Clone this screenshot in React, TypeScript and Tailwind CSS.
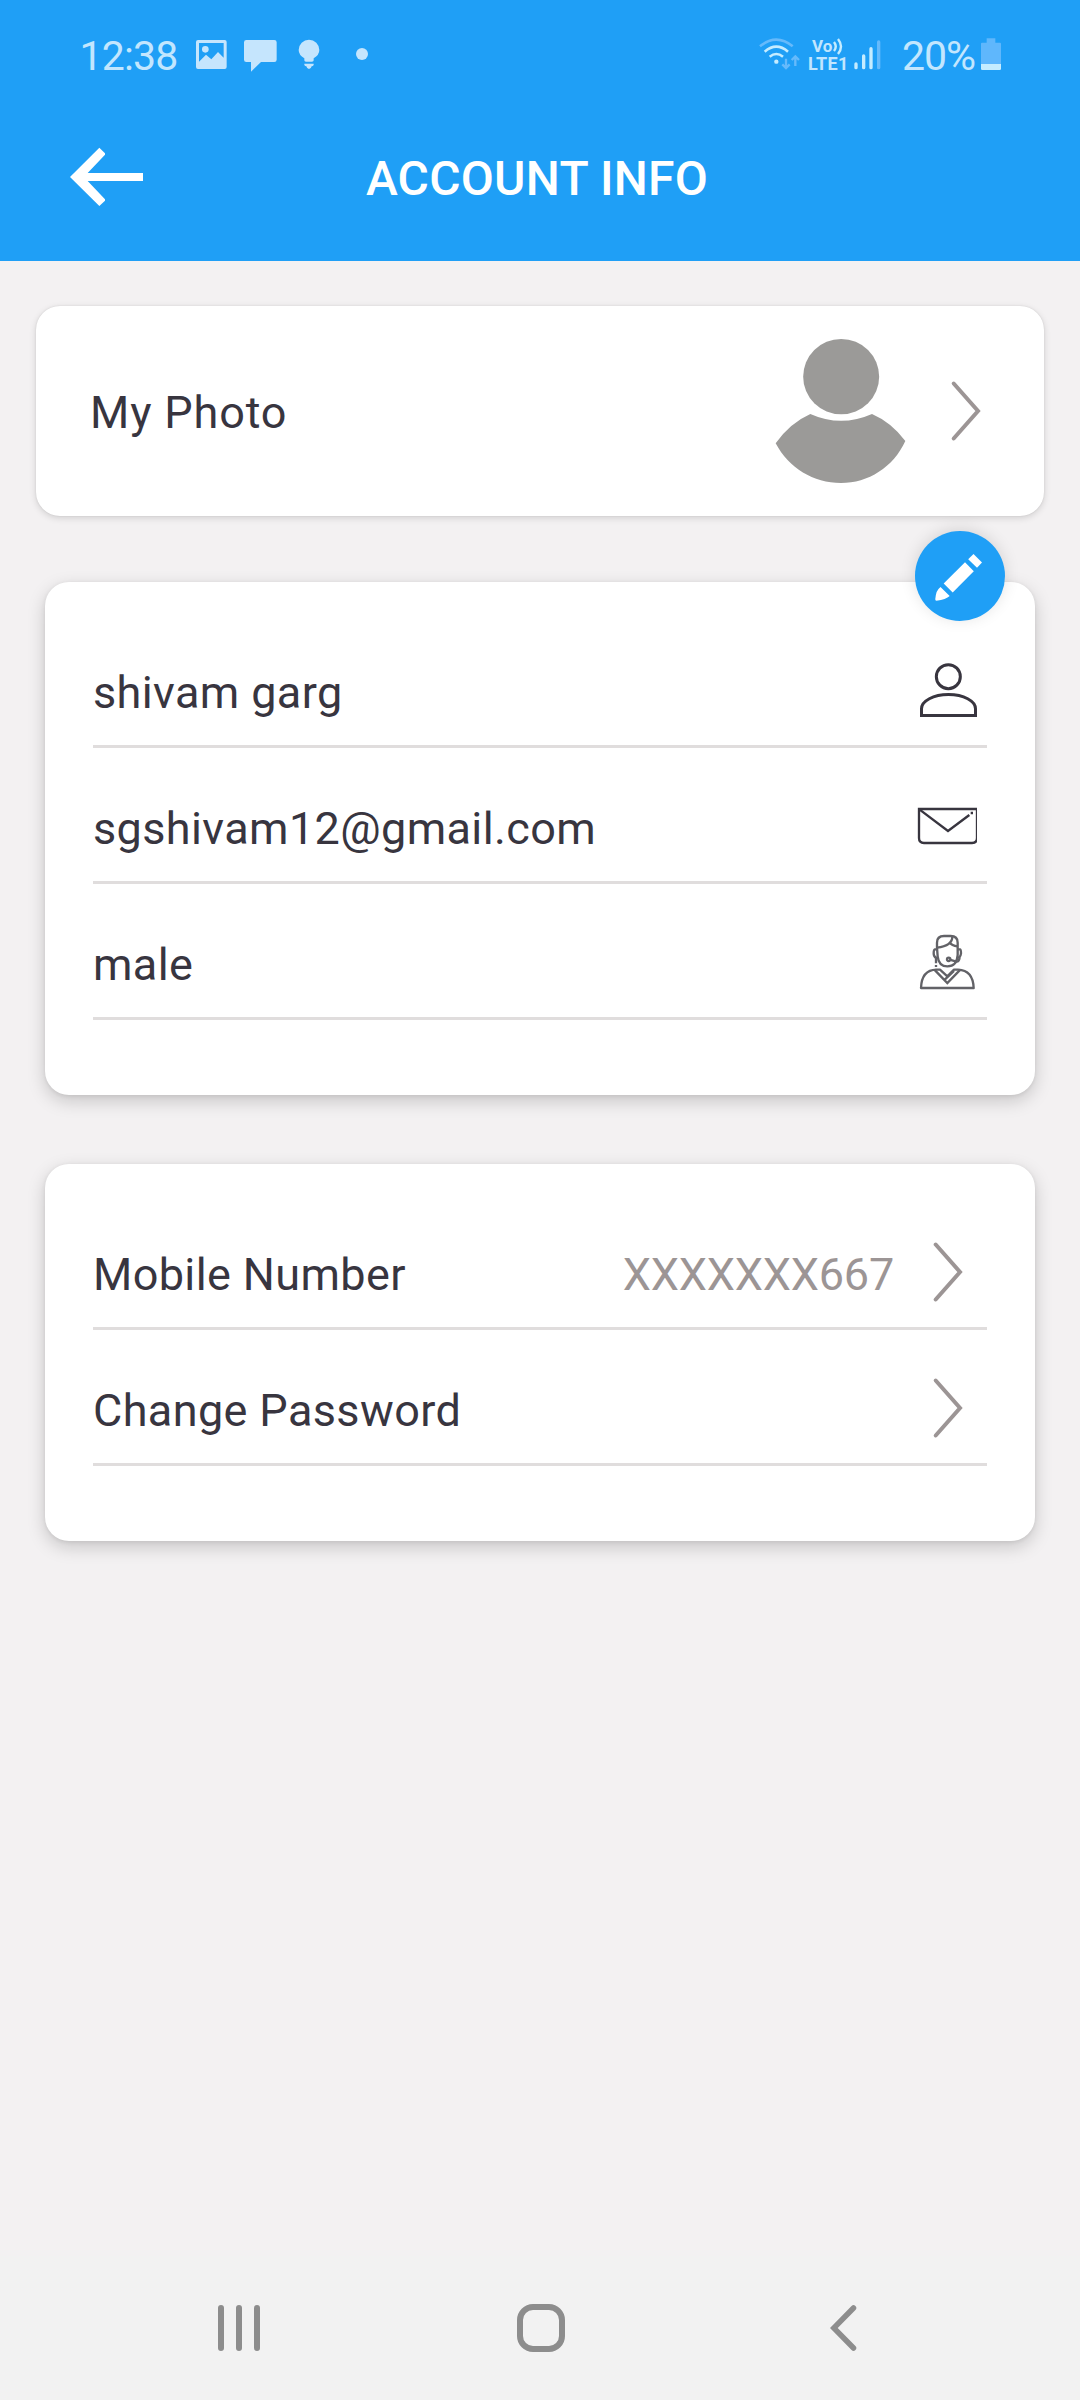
import type { ReactNode } from "react";

function Chevron() {
  return (
    <svg className="h-[62px] w-[31px] shrink-0" viewBox="0 0 31 62" fill="none" stroke="#9c9595" strokeWidth="4" strokeLinecap="round">
      <path d="M3.7 3.5 L28 31 L3.7 58.5" strokeLinejoin="miter" />
    </svg>
  );
}

function PhotoIcon() {
  return (
    <svg className="h-9 w-[31px]" viewBox="468 108 93 108" fill="#c5e5fd">
      <path fillRule="evenodd" d="M474 120H554Q560 120 560 126V201Q560 207 554 207H474Q468 207 468 201V126Q468 120 474 120ZM477 129V185L498 164L514 178L534 156L551 173V129Z" />
      <circle cx="496" cy="148" r="10" />
    </svg>
  );
}

function ChatIcon() {
  return (
    <svg className="h-9 w-[33px]" viewBox="612 108 99 108" fill="#c5e5fd">
      <path d="M619 120H703Q710 120 710 127V179Q710 186 703 186H663L633 215V186H619Q612 186 612 179V127Q612 120 619 120Z" />
    </svg>
  );
}

function BulbIcon() {
  return (
    <svg className="h-9 w-[22px]" viewBox="775 108 66 108" fill="#c5e5fd">
      <path d="M808 119A31 31 0 0 1 839 150Q839 165 822 175V181Q822 185 817 185H799Q794 185 794 181V175Q777 165 777 150A31 31 0 0 1 808 119Z" />
      <path d="M794 191H822V195Q820 199 816 199Q814 207 808 207Q802 207 800 199Q796 199 794 195Z" />
    </svg>
  );
}

function WifiIcon() {
  return (
    <svg className="h-9 w-[41px]" viewBox="59 108 123 108" fill="none" strokeWidth="8">
      <path d="M62 139Q111 99 160 139" stroke="#66bafb" />
      <path d="M76 155Q111 125 146 155M91 170Q111 154 131 170" stroke="#c5ecff" />
      <circle cx="111" cy="185" r="6.5" fill="#c5ecff" />
      <path d="M140 176V202M129 193L140 204L151 193M168 198V170M157 180L168 169L179 180" stroke="#66bafb" strokeWidth="7" />
    </svg>
  );
}

function SignalIcon() {
  return (
    <svg className="h-9 w-[27px]" viewBox="342 108 81 108" fill="none" strokeWidth="10" strokeLinecap="round" stroke="#c5ecff">
      <path d="M348 192V203M371 168V203M393 146V203" />
      <path d="M416 126V203" stroke="#66bafb" />
    </svg>
  );
}

function BatteryIcon() {
  return (
    <svg className="h-9 w-[20px]" viewBox="723 108 60 108">
      <path d="M740 115H766V128H780Q783 128 783 131V192H723V131Q723 128 726 128H740Z" fill="#5fb7fc" />
      <path d="M723 192H783V206Q783 210 779 210H727Q723 210 723 206Z" fill="#c5ecff" />
    </svg>
  );
}

function StatusBar() {
  return (
    <div className="flex h-[108px] items-center text-[#c2e6fe]">
      <span className="ml-[79.5px] w-[116.5px] pt-1 text-[41px] leading-none tracking-[-0.8px]">12:38</span>
      <PhotoIcon />
      <span className="ml-[17px] flex"><ChatIcon /></span>
      <span className="ml-[21px] flex"><BulbIcon /></span>
      <span className="ml-[36px] h-3 w-3 rounded-full bg-[#c5e5fd]" />
      <span className="ml-auto flex"><WifiIcon /></span>
      <span className="ml-2 flex w-[46px] flex-col pt-0.5 font-bold">
        <span className="flex h-[17px] items-center pl-1 text-[17px] leading-none">
          Vo
          <svg className="mb-px ml-px h-[17px] w-[11px]" viewBox="0 0 11 17" fill="none" stroke="#c5ecff" strokeWidth="2.4">
            <path d="M1 4Q4.500 8.500 1 13M5 1Q11 8.500 5 16" />
          </svg>
        </span>
        <span className="h-[17px] text-[18px] leading-[17px] tracking-[0.3px]">LTE1</span>
      </span>
      <SignalIcon />
      <span className="ml-[21px] w-[79px] pt-1 text-[41px] leading-none tracking-[-1px]">20%</span>
      <span className="mr-[79px] flex"><BatteryIcon /></span>
    </div>
  );
}

function Row({ label, children }: { label: string; children: ReactNode }) {
  return (
    <div className="flex h-[136px] items-center border-b-[3px] border-[#e0dddd] pt-[23px]">
      <span className="flex-1 pt-[5px] text-[45px] leading-[53px] tracking-[0.38px] text-[#38353f]">{label}</span>
      {children}
    </div>
  );
}

function FieldIcon({ viewBox, stroke, width, children }: { viewBox: string; stroke: string; width: number; children: ReactNode }) {
  return (
    <svg className="mr-[10px] h-[60px] w-[60px] shrink-0" viewBox={viewBox} fill="none" stroke={stroke} strokeWidth={width}>
      {children}
    </svg>
  );
}

const cardClass =
  "relative mx-[45px] rounded-[24px] bg-white px-12 pt-[30px] pb-[75px] shadow-[0_6px_18px_rgba(0,0,0,0.18),0_1px_4px_rgba(0,0,0,0.08)]";

export default function App() {
  return (
    <div className="flex h-[2400px] w-[1080px] flex-col bg-[#f3f1f2] font-['Roboto',sans-serif]">
      <header className="h-[261px] bg-[#1f9ff6]">
        <StatusBar />
        <div className="flex h-[138px] items-center pr-[149px] pl-[70px]">
          <svg className="h-[60px] w-[73px]" viewBox="90 441 219 180" fill="#fff">
            <path d="M90 531L178 443L195 460V464L143 519H309V543H143L195 598V602L178 618Z" />
          </svg>
          <h1 className="flex-1 pt-[3px] text-center text-[48px] leading-none font-medium tracking-[0.25px] whitespace-nowrap text-white">ACCOUNT INFO</h1>
        </div>
      </header>

      <main className="flex-1 pt-[45px]">
        <section className="mx-9 flex h-[210px] items-center rounded-[24px] bg-white pr-[63px] pl-[54px] shadow-[0_2px_7px_rgba(0,0,0,0.14),0_0_2px_rgba(0,0,0,0.1)]">
          <span className="flex-1 pt-[3px] text-[45px] leading-[53px] tracking-[0.85px] text-[#38353f]">My Photo</span>
          <svg className="mr-[43px] h-[150px] w-[134px]" viewBox="99 138 402 450" fill="#9b9a98">
            <ellipse cx="303.5" cy="260" rx="114" ry="113" />
            <path d="M211 372Q303 413 396 372Q454 397 496 453C460 532 385 579 303 579C220 579 147 535 107 460Q150 399 211 372Z" />
          </svg>
          <Chevron />
        </section>

        <section className={`${cardClass} mt-[66px]`}>
          <button aria-label="Edit" className="absolute -top-[51px] right-[30px] h-[90px] w-[90px] rounded-full bg-[#1f9ff6] shadow-[0_-2px_16px_rgba(0,0,0,0.12)]">
            <svg className="h-[90px] w-[90px]" viewBox="0 0 90 90" fill="#fff">
              <path d="M58.5 23L67 31.5L62 36.8L53.2 28.2Z" />
              <path d="M50 31.3L58.8 40.2L37.7 61.5L28.7 52.5Z" />
              <path d="M25.5 56L34.7 65Q31 68.5 21.5 69.8Q20 69.8 20.3 68Q21 59 25.5 56Z" />
            </svg>
          </button>
          <Row label="shivam garg">
            <FieldIcon viewBox="111 60 180 180" stroke="#38353f" width={9}>
              <circle cx="205" cy="110" r="36" />
              <path d="M124.500 226.500V206C124.500 183 160 163.500 205.500 163.500S286.500 183 286.500 206V226.500Z" />
            </FieldIcon>
          </Row>
          <Row label="sgshivam12@gmail.com">
            <FieldIcon viewBox="111 468 180 180" stroke="#38353f" width={7}>
              <path d="M117 507H291V594Q291 609 276 609H132Q117 609 117 594Z" />
              <path d="M119 509L204 573L268 525M272 519H279" />
            </FieldIcon>
          </Row>
          <Row label="male">
            <FieldIcon viewBox="111 876 180 180" stroke="#626267" width={7}>
              <path d="M171 923V908Q171 888 192 888H212Q233 888 233 908V945Q231 979 202 979Q176 979 173 949Z" strokeLinejoin="round" />
              <path d="M171 923Q217 917 217 890M209 907Q215 917 233 919" />
              <path d="M171 928H165Q161 929 161 940Q161 950 167 953H173M233 928H240Q243 929 243 940Q242 949 238 952H231" />
              <path d="M239 952Q237 966 229 965L209 959M168 953V970M168 975V981" />
              <circle cx="206" cy="958" r="5" />
              <path d="M123 1044Q125 990 169 989H180L202 1009L222 989H234Q279 991 281 1044Z" strokeLinejoin="round" />
              <path d="M163 989L202 1029L241 989M195 1018L222 993" />
            </FieldIcon>
          </Row>
        </section>

        <section className={`${cardClass} mt-[69px]`}>
          <Row label="Mobile Number">
            <span className="mr-[38px] pt-[5px] text-[45px] leading-[53px] tracking-[-0.2px] text-[#9c9595]">XXXXXXX667</span>
            <span className="mr-6 flex"><Chevron /></span>
          </Row>
          <Row label="Change Password">
            <span className="mr-6 flex"><Chevron /></span>
          </Row>
        </section>
      </main>

      <nav className="flex h-[144px] items-center bg-[#f2f2f2] pr-[223px] pl-[218px]">
        <svg className="h-12 w-[42px]" viewBox="0 0 42 48" stroke="#8d8d8d" strokeWidth="6" strokeLinecap="round">
          <path d="M3 4V44M21 4V44M39 4V44" />
        </svg>
        <svg className="ml-[257px] h-12 w-12" viewBox="0 0 48 48" fill="none" stroke="#8d8d8d" strokeWidth="6">
          <rect x="3" y="3" width="42" height="42" rx="13" />
        </svg>
        <svg className="ml-auto h-12 w-[27px]" viewBox="0 0 27 48" fill="none" stroke="#8d8d8d" strokeWidth="5.500" strokeLinecap="round">
          <path d="M23.500 4L3.800 24L23.500 44" />
        </svg>
      </nav>
    </div>
  );
}
